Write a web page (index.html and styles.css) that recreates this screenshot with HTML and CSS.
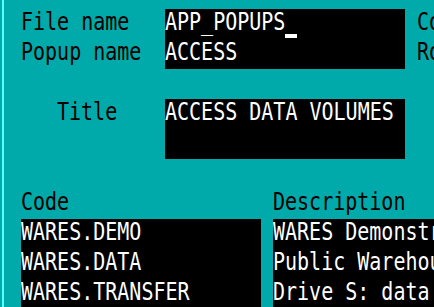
FILE: index.html
```html
<!DOCTYPE html>
<html>
<head>
    <meta charset="UTF-8">
    <title>Popup Definition</title>
    <link rel="stylesheet" href="styles.css">
</head>
<body>
    <div class="screen">
        <div class="top-row">
            <div class="labels">
                <div class="line"><span class="txt">File name</span></div>
                <div class="line"><span class="txt">Popup name</span></div>
            </div>
            <div class="field">
                <div class="line"><span class="txt">APP_POPUPS</span><span class="cursor"></span></div>
                <div class="line"><span class="txt">ACCESS</span></div>
            </div>
            <div class="labels side">
                <div class="line"><span class="txt">Columns</span></div>
                <div class="line"><span class="txt">Rows</span></div>
            </div>
        </div>

        <div class="title-row">
            <div class="labels title-label">
                <div class="line"><span class="txt">Title</span></div>
            </div>
            <div class="field title-field">
                <div class="line"><span class="txt">ACCESS DATA VOLUMES</span></div>
                <div class="line"></div>
            </div>
        </div>

        <div class="lists">
            <div class="list code-list">
                <div class="line head"><span class="txt">Code</span></div>
                <div class="list-body">
                    <div class="line"><span class="txt">WARES.DEMO</span></div>
                    <div class="line"><span class="txt">WARES.DATA</span></div>
                    <div class="line"><span class="txt">WARES.TRANSFER</span></div>
                </div>
            </div>
            <div class="list desc-list">
                <div class="line head"><span class="txt">Description</span></div>
                <div class="list-body">
                    <div class="line"><span class="txt">WARES Demonstration data</span></div>
                    <div class="line"><span class="txt">Public Warehouse data</span></div>
                    <div class="line"><span class="txt">Drive S: data transfer</span></div>
                </div>
            </div>
        </div>
    </div>
</body>
</html>
```

FILE: styles.css
```css
body {
    margin: 0;
    background-color: #00aaaa;
    font-family: "DejaVu Sans Mono", monospace;
    font-size: 20px;
    color: #000;
    overflow: hidden;
}

.screen {
    margin-left: 2px;
    border-left: 2px solid #55ffff;
    padding: 9px 0 0 17px;
    height: 100vh;
    box-sizing: border-box;
    white-space: nowrap;
    overflow: hidden;
}

.line {
    height: 30px;
    line-height: 30px;
}

.txt {
    display: inline-block;
    transform: scaleY(1.25);
    transform-origin: 0 21px;
    position: relative;
    top: -1px;
}

.top-row,
.title-row,
.lists {
    display: flex;
}

.top-row > *,
.title-row > *,
.lists > * {
    flex-shrink: 0;
}

.labels {
    width: 144px;
}

.field {
    width: 240px;
    background-color: #000;
    color: #fff;
}

.side {
    margin-left: 12px;
    width: auto;
}

.cursor {
    display: inline-block;
    width: 12px;
    height: 4px;
    background-color: #fff;
    vertical-align: -7px;
}

.title-row {
    margin-top: 30px;
}

.title-label .txt {
    margin-left: 36px;
}

.lists {
    margin-top: 30px;
}

.code-list {
    width: 240px;
}

.desc-list {
    margin-left: 12px;
    width: 480px;
}

.list-body {
    background-color: #000;
    color: #fff;
}
```
